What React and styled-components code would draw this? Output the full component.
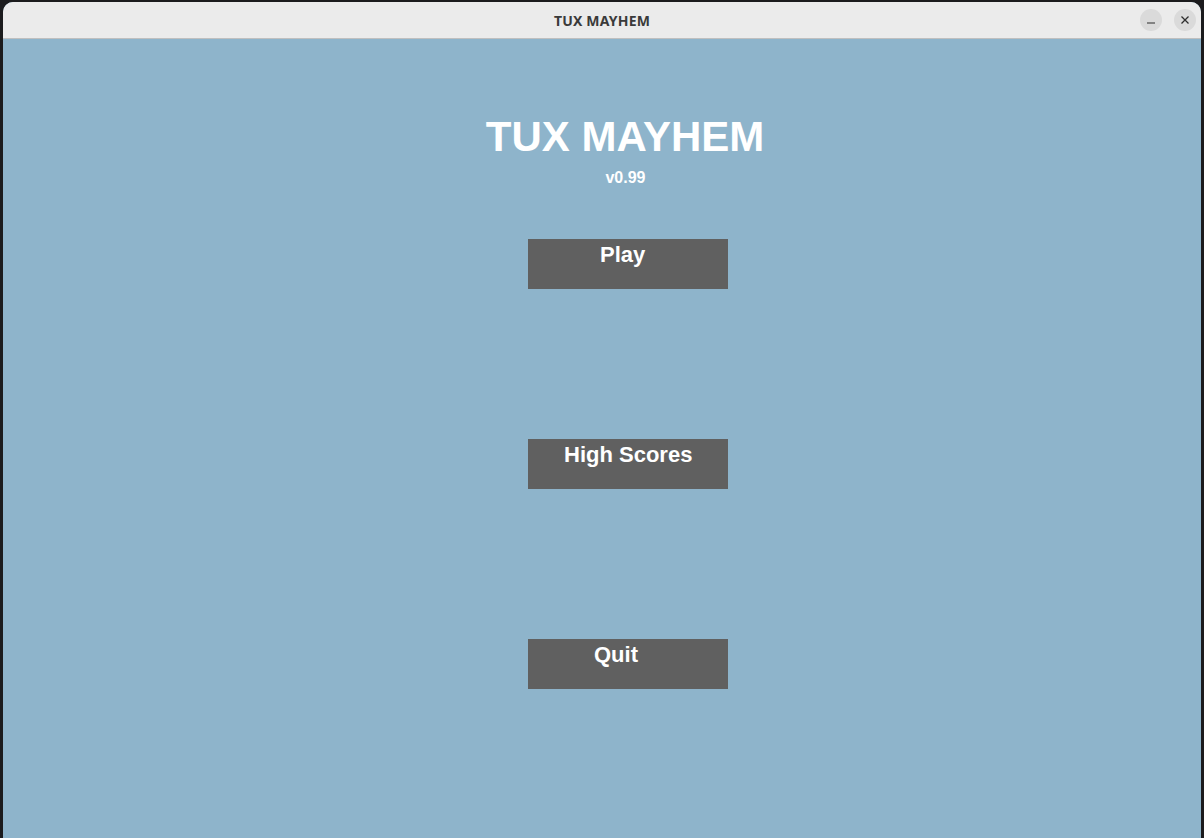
import React from "react";
import styled, { createGlobalStyle } from "styled-components";

const Global = createGlobalStyle`
  html, body { margin: 0; padding: 0; background: #1b1b1d; overflow: hidden; }
  #root { height: 838px; }
`;

const Desktop = styled.div`
  height: 838px;
  padding: 2px 3px 0 3px;
  box-sizing: border-box;
  display: flex;
`;

const Window = styled.div`
  flex: 1;
  display: flex;
  flex-direction: column;
  border-radius: 10px 10px 0 0;
  overflow: hidden;
  background: #8eb4cb;
`;

const TitleBar = styled.div`
  height: 36px;
  flex: none;
  background: #ebebeb;
  border-bottom: 1px solid #bfbfbf;
  display: flex;
  align-items: center;
  justify-content: center;
  position: relative;
`;

const TitleText = styled.div`
  font-family: "Noto Sans", "DejaVu Sans", sans-serif;
  font-weight: 700;
  font-size: 14px;
  color: #3a3a3a;
  letter-spacing: 0.2px;
`;

const Controls = styled.div`
  position: absolute;
  right: 5px;
  top: 7px;
  display: flex;
  gap: 12px;
`;

const CtlButton = styled.div`
  width: 22px;
  height: 22px;
  border-radius: 50%;
  background: #dadada;
  display: flex;
  align-items: center;
  justify-content: center;
`;

const Content = styled.main`
  flex: 1;
  display: flex;
  flex-direction: column;
  align-items: center;
  padding: 74px 0 0 52px;
  font-family: "Liberation Sans", Arial, sans-serif;
  color: #ffffff;
`;

const GameTitle = styled.h1`
  margin: 0 6px 0 0;
  font-size: 42px;
  line-height: 48px;
  font-weight: 700;
`;

const Version = styled.div`
  margin: 8px 5px 0 0;
  font-size: 16px;
  line-height: 18px;
  font-weight: 700;
`;

const Menu = styled.nav`
  margin-top: 52px;
  display: flex;
  flex-direction: column;
  gap: 150px;
`;

const MenuButton = styled.button`
  width: 200px;
  height: 50px;
  border: none;
  margin: 0;
  background: #606060;
  color: #ffffff;
  font-family: "Liberation Sans", Arial, sans-serif;
  font-weight: 700;
  font-size: 22px;
  line-height: 25px;
  padding: 3px 0 0 ${(p) => p.$indent}px;
  box-sizing: border-box;
  display: flex;
  align-items: flex-start;
  justify-content: flex-start;
  cursor: pointer;
`;

const ButtonLabel = styled.span`
  display: block;
  height: 25px;
`;

export default function App() {
  return (
    <>
      <Global />
      <Desktop>
        <Window>
          <TitleBar>
            <TitleText>TUX MAYHEM</TitleText>
            <Controls>
              <CtlButton>
                <svg width="10" height="10" viewBox="0 0 10 10">
                  <line x1="1" y1="8" x2="9" y2="8" stroke="#2d2d2d" strokeWidth="1.2" />
                </svg>
              </CtlButton>
              <CtlButton>
                <svg width="10" height="10" viewBox="0 0 10 10">
                  <path d="M1.5 1.5 L8.5 8.5 M8.5 1.5 L1.5 8.5" stroke="#2d2d2d" strokeWidth="1.3" />
                </svg>
              </CtlButton>
            </Controls>
          </TitleBar>
          <Content>
            <GameTitle>TUX MAYHEM</GameTitle>
            <Version>v0.99</Version>
            <Menu>
              <MenuButton $indent={72}><ButtonLabel>Play</ButtonLabel></MenuButton>
              <MenuButton $indent={36}><ButtonLabel>High Scores</ButtonLabel></MenuButton>
              <MenuButton $indent={66}><ButtonLabel>Quit</ButtonLabel></MenuButton>
            </Menu>
          </Content>
        </Window>
      </Desktop>
    </>
  );
}
